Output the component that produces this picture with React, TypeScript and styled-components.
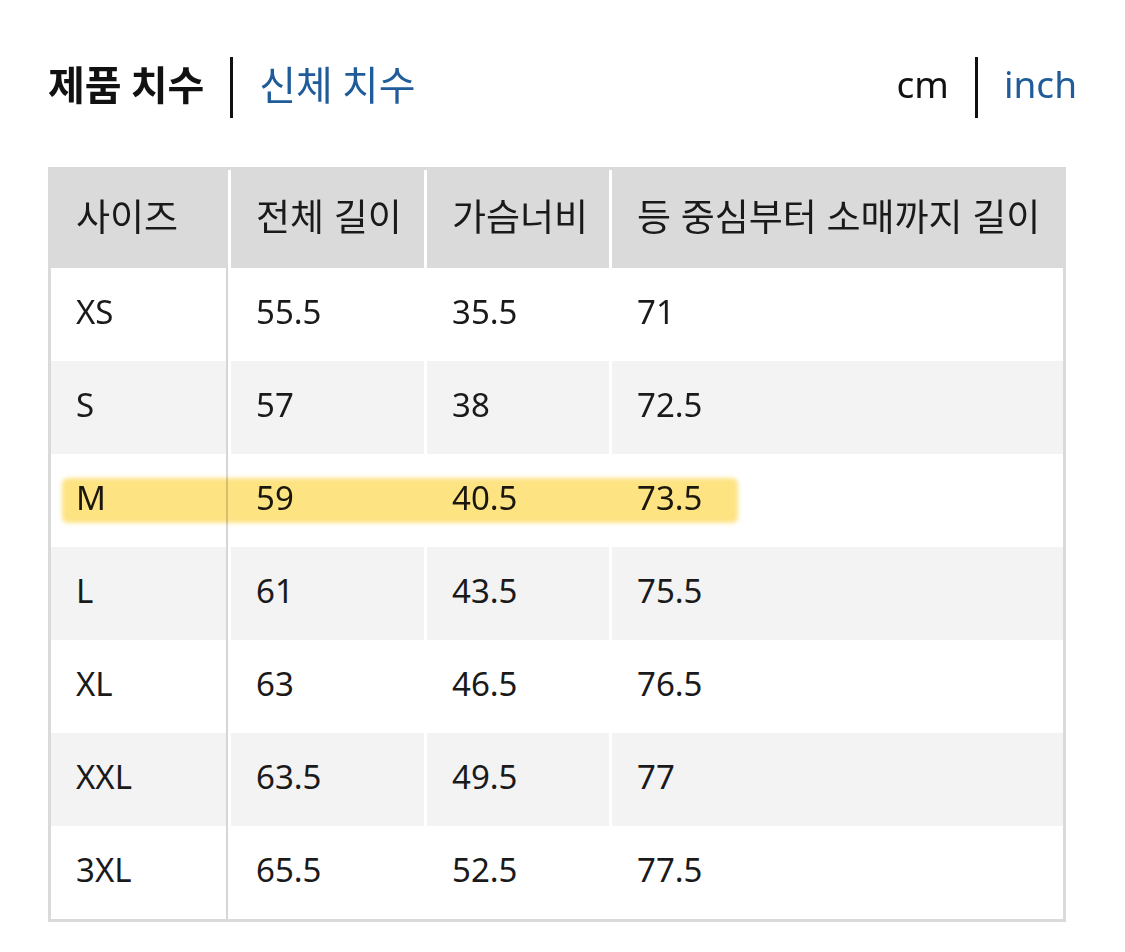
import React from 'react'
import styled, { createGlobalStyle } from 'styled-components'

const GlobalStyle = createGlobalStyle`
  body {
    margin: 0;
    background: #ffffff;
    font-family: "Noto Sans", "Noto Sans CJK KR", sans-serif;
    color: #1a1a1a;
  }
`

interface SizeRow {
  size: string
  length: string
  chest: string
  sleeve: string
}

const rows: SizeRow[] = [
  { size: 'XS', length: '55.5', chest: '35.5', sleeve: '71' },
  { size: 'S', length: '57', chest: '38', sleeve: '72.5' },
  { size: 'M', length: '59', chest: '40.5', sleeve: '73.5' },
  { size: 'L', length: '61', chest: '43.5', sleeve: '75.5' },
  { size: 'XL', length: '63', chest: '46.5', sleeve: '76.5' },
  { size: 'XXL', length: '63.5', chest: '49.5', sleeve: '77' },
  { size: '3XL', length: '65.5', chest: '52.5', sleeve: '77.5' },
]

const headers = ['사이즈', '전체 길이', '가슴너비', '등 중심부터 소매까지 길이']

function App() {
  return (
    <Page>
      <GlobalStyle />
      <TopBar>
        <TabGroup>
          <Tab $active>제품 치수</Tab>
          <Divider />
          <Tab>신체 치수</Tab>
        </TabGroup>
        <TabGroup>
          <Unit $active>cm</Unit>
          <Divider />
          <Unit>inch</Unit>
        </TabGroup>
      </TopBar>

      <Table>
        <Row $variant='head'>
          {headers.map((h, i) => (
            <Cell key={h} $first={i === 0} $head>{h}</Cell>
          ))}
        </Row>
        {rows.map((r, i) => (
          <Row key={r.size} $variant={i % 2 === 1 ? 'grey' : 'white'}>
            <Cell $first>{r.size}</Cell>
            <Cell>{r.length}</Cell>
            <Cell>{r.chest}</Cell>
            <Cell>{r.sleeve}</Cell>
            {r.size === 'M' && <Highlight />}
          </Row>
        ))}
      </Table>
    </Page>
  )
}

const Page = styled.div`
  width: 1125px;
  height: 952px;
  padding: 57px 48px 0 48px;
  box-sizing: border-box;
`

const TopBar = styled.div`
  display: flex;
  justify-content: space-between;
  align-items: center;
  height: 61px;
  margin-bottom: 49px;
`

const TabGroup = styled.div`
  display: flex;
  align-items: center;
  gap: 26px;
  height: 100%;
`

const Tab = styled.span<{ $active?: boolean }>`
  font-family: "Noto Sans CJK KR", sans-serif;
  font-size: 40px;
  font-weight: ${(p) => (p.$active ? 700 : 400)};
  color: ${(p) => (p.$active ? '#111111' : '#1f5c99')};
  line-height: 1;
  padding-bottom: 10px;
`

const Unit = styled.span<{ $active?: boolean }>`
  font-family: "Noto Sans", sans-serif;
  font-size: 37px;
  color: ${(p) => (p.$active ? '#111111' : '#1f5c99')};
  line-height: 1;
  padding-bottom: 8px;
`

const Divider = styled.div`
  width: 3px;
  height: 61px;
  background: #111111;
`

const Table = styled.div`
  width: 1018px;
  border: 3px solid #dadada;
  box-sizing: border-box;
`

const Row = styled.div<{ $variant: 'head' | 'grey' | 'white' }>`
  position: relative;
  display: grid;
  grid-template-columns: 177px 193px 182px 1fr;
  column-gap: 3px;
  height: ${(p) => (p.$variant === 'head' ? '98px' : '93px')};
  background: #ffffff;

  & > div {
    background: ${(p) =>
      p.$variant === 'head' ? '#dadada' : p.$variant === 'grey' ? '#f3f3f3' : '#ffffff'};
  }
`

const Cell = styled.div<{ $first?: boolean; $head?: boolean }>`
  display: flex;
  align-items: center;
  padding-left: 25px;
  padding-bottom: ${(p) => (p.$head ? '8px' : '6px')};
  box-sizing: border-box;
  font-family: "Noto Sans", "Noto Sans CJK KR", sans-serif;
  font-size: ${(p) => (p.$head ? '37px' : '33px')};
  color: #1a1a1a;
  border-right: ${(p) => (p.$first && !p.$head ? '2px solid #d6d6d6' : 'none')};
  white-space: nowrap;
`

const Highlight = styled.span`
  position: absolute;
  left: 11px;
  top: 24px;
  width: 676px;
  height: 45px;
  border-radius: 6px;
  background: rgba(253, 214, 72, 0.68);
  filter: blur(2px);
  mix-blend-mode: multiply;
  pointer-events: none;
`

export default App
